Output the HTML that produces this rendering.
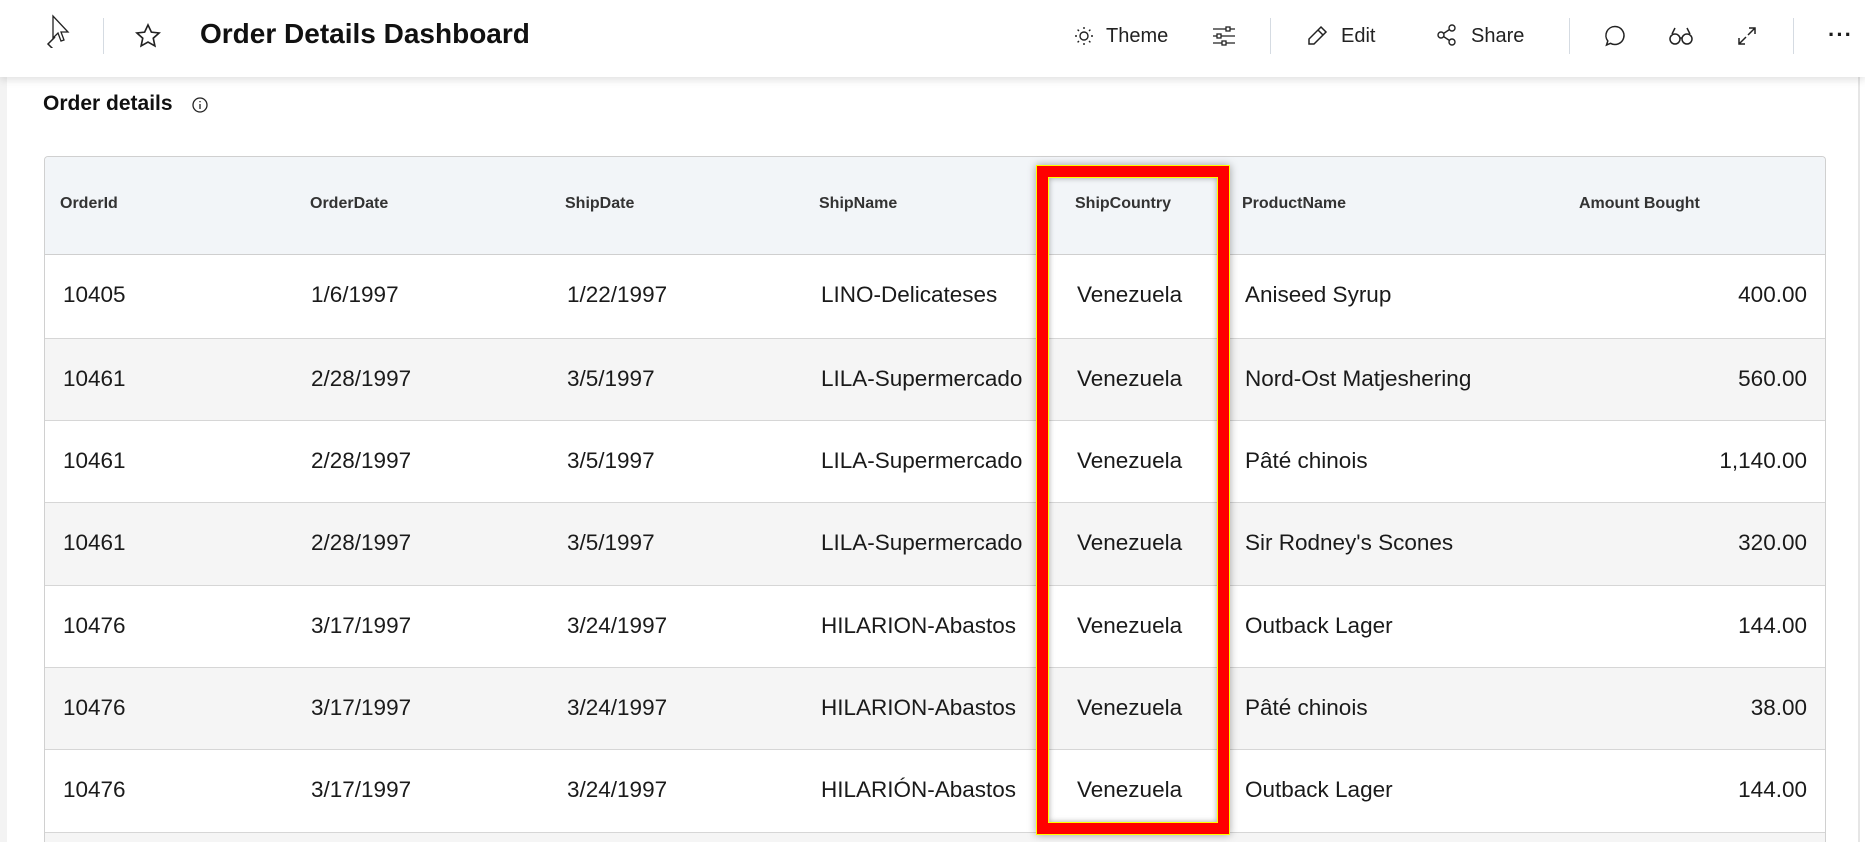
<!DOCTYPE html>
<html><head><meta charset="utf-8"><style>
*{margin:0;padding:0;box-sizing:border-box}
html,body{width:1865px;height:842px;overflow:hidden}
body{background:#fff;font-family:"Liberation Sans",sans-serif;color:#1a1a1a;position:relative}
.hdr{position:absolute;left:0;top:0;width:1865px;height:77px;background:#fff;box-shadow:0 3px 8px rgba(0,0,0,.12);z-index:2}
.abs{position:absolute}
.vd{position:absolute;top:18px;width:1px;height:36px;background:#d5dbe2}
.t{position:absolute;top:25px;font-size:20px;color:#222}
.leftstrip{position:absolute;left:0;top:77px;width:7px;height:765px;background:#f3f3f3}
.rightline{position:absolute;left:1858px;top:77px;width:2px;height:765px;background:#e6e6e6}
.tbl{position:absolute;left:44px;top:156px;width:1782px;height:686px;border:1px solid #d0d0d0;border-bottom:none;border-radius:4px 4px 0 0;overflow:hidden}
.th{position:absolute;left:0;top:0;width:100%;height:98px;background:#f2f5f8;border-bottom:1px solid #cfcfcf}
.th span{position:absolute;top:38px;font-size:16px;font-weight:bold;color:#333}
.row{position:absolute;left:0;width:100%;height:83px;border-top:1px solid #d6d6d6}
.row span{position:absolute;top:27px;font-size:22.5px}
.row .amt{right:18px}
</style></head><body>
<div class="hdr">
 <svg class="abs" style="left:45px;top:14px" width="26" height="34" viewBox="0 0 26 34"><path d="M8 2 L8 24 L13 19 L16 27 L19 26 L16 18 L23 18 Z" fill="#fff" stroke="#222" stroke-width="1.3"/><path d="M10 23 L3 30 L10 37" fill="none" stroke="#222" stroke-width="1.5"/></svg>
 <div class="vd" style="left:103px"></div>
 <svg class="abs" style="left:134px;top:22px" width="28" height="28" viewBox="0 0 24 24"><path d="M12 2.5l2.9 6.2 6.6.7-5 4.5 1.4 6.6L12 17.2 6.1 20.5l1.4-6.6-5-4.5 6.6-.7z" fill="none" stroke="#222" stroke-width="1.4"/></svg>
 <div class="abs" style="left:200px;top:18px;font-size:28px;font-weight:bold;color:#111">Order Details Dashboard</div>
 <svg class="abs" style="left:1074px;top:26px" width="20" height="20" viewBox="0 0 20 20" fill="none" stroke="#222" stroke-width="1.4"><circle cx="10" cy="10" r="4"/><path d="M10 1v2M10 17v2M1 10h2M17 10h2M3.6 3.6l1.4 1.4M15 15l1.4 1.4M3.6 16.4L5 15M15 5l1.4-1.4"/></svg>
 <div class="t" style="left:1106px">Theme</div>
 <svg class="abs" style="left:1212px;top:24px" width="24" height="24" viewBox="0 0 24 24" fill="none" stroke="#222" stroke-width="1.3"><path d="M1 5h22M1 12h22M1 19h22"/><rect x="14" y="3" width="4" height="4" fill="#fff"/><rect x="5" y="10" width="4" height="4" fill="#fff"/><rect x="10" y="17" width="4" height="4" fill="#fff"/></svg>
 <div class="vd" style="left:1270px"></div>
 <svg class="abs" style="left:1306px;top:25px" width="22" height="22" viewBox="0 0 22 22" fill="none" stroke="#222" stroke-width="1.5"><path d="M15 2l5 5L8 19H3v-5z M12 5l5 5"/></svg>
 <div class="t" style="left:1341px">Edit</div>
 <svg class="abs" style="left:1436px;top:24px" width="22" height="22" viewBox="0 0 22 22" fill="none" stroke="#222" stroke-width="1.4"><circle cx="5" cy="11" r="3"/><circle cx="16" cy="4" r="3"/><circle cx="16" cy="18" r="3"/><path d="M7.5 9.5l6-4M7.5 12.5l6 4"/></svg>
 <div class="t" style="left:1471px">Share</div>
 <div class="vd" style="left:1569px"></div>
 <svg class="abs" style="left:1603px;top:24px" width="24" height="24" viewBox="0 0 24 24" fill="none" stroke="#222" stroke-width="1.5"><path d="M12 2.5a9 9 0 1 1-4.5 16.8L3.5 21l1.3-4A9 9 0 0 1 12 2.5z"/></svg>
 <svg class="abs" style="left:1668px;top:26px" width="26" height="20" viewBox="0 0 26 20" fill="none" stroke="#222" stroke-width="1.5"><circle cx="7" cy="13" r="5"/><circle cx="19" cy="13" r="5"/><path d="M12 12h2M4 8l3-6M22 8l-3-6"/></svg>
 <svg class="abs" style="left:1736px;top:25px" width="22" height="22" viewBox="0 0 22 22" fill="none" stroke="#222" stroke-width="1.5"><path d="M13 3h6v6M19 3l-7 7M9 19H3v-6M3 19l7-7"/></svg>
 <div class="vd" style="left:1793px"></div>
 <div class="abs" style="left:1828px;top:22px;font-size:22px;font-weight:bold;letter-spacing:1px">···</div>
</div>
<div class="leftstrip"></div><div class="rightline"></div>
<div class="abs" style="left:43px;top:92px;font-size:21px;font-weight:bold;color:#111">Order details</div>
<svg class="abs" style="left:191px;top:96px" width="18" height="18" viewBox="0 0 18 18" fill="none" stroke="#222" stroke-width="1.3"><circle cx="9" cy="9" r="7"/><path d="M9 8v5M9 5v1.2"/></svg>
<div class="tbl">
 <div class="th"><span style="left:15px">OrderId</span><span style="left:265px">OrderDate</span><span style="left:520px">ShipDate</span><span style="left:774px">ShipName</span><span style="left:1030px">ShipCountry</span><span style="left:1197px">ProductName</span><span style="left:1534px">Amount Bought</span></div>
 <div class="row" style="top:98px;background:#fff;border-top:none"><span style="left:18px">10405</span><span style="left:266px">1/6/1997</span><span style="left:522px">1/22/1997</span><span style="left:776px">LINO-Delicateses</span><span style="left:1032px">Venezuela</span><span style="left:1200px">Aniseed Syrup</span><span class="amt">400.00</span></div>
 <div class="row" style="top:181px;background:#f5f5f5"><span style="left:18px">10461</span><span style="left:266px">2/28/1997</span><span style="left:522px">3/5/1997</span><span style="left:776px">LILA-Supermercado</span><span style="left:1032px">Venezuela</span><span style="left:1200px">Nord-Ost Matjeshering</span><span class="amt">560.00</span></div>
 <div class="row" style="top:263px;background:#fff"><span style="left:18px">10461</span><span style="left:266px">2/28/1997</span><span style="left:522px">3/5/1997</span><span style="left:776px">LILA-Supermercado</span><span style="left:1032px">Venezuela</span><span style="left:1200px">Pâté chinois</span><span class="amt">1,140.00</span></div>
 <div class="row" style="top:345px;background:#f5f5f5"><span style="left:18px">10461</span><span style="left:266px">2/28/1997</span><span style="left:522px">3/5/1997</span><span style="left:776px">LILA-Supermercado</span><span style="left:1032px">Venezuela</span><span style="left:1200px">Sir Rodney's Scones</span><span class="amt">320.00</span></div>
 <div class="row" style="top:428px;background:#fff"><span style="left:18px">10476</span><span style="left:266px">3/17/1997</span><span style="left:522px">3/24/1997</span><span style="left:776px">HILARION-Abastos</span><span style="left:1032px">Venezuela</span><span style="left:1200px">Outback Lager</span><span class="amt">144.00</span></div>
 <div class="row" style="top:510px;background:#f5f5f5"><span style="left:18px">10476</span><span style="left:266px">3/17/1997</span><span style="left:522px">3/24/1997</span><span style="left:776px">HILARION-Abastos</span><span style="left:1032px">Venezuela</span><span style="left:1200px">Pâté chinois</span><span class="amt">38.00</span></div>
 <div class="row" style="top:592px;background:#fff"><span style="left:18px">10476</span><span style="left:266px">3/17/1997</span><span style="left:522px">3/24/1997</span><span style="left:776px">HILARIÓN-Abastos</span><span style="left:1032px">Venezuela</span><span style="left:1200px">Outback Lager</span><span class="amt">144.00</span></div>
 <div class="row" style="top:675px;background:#f5f5f5;height:11px"></div>
</div>
<div class="abs" style="left:1036px;top:165px;width:194px;height:670px;border:1px solid #ff0;box-shadow:0 0 8px rgba(0,0,0,.35);z-index:3">
 <div style="position:absolute;inset:0;border:11px solid #f00"></div>
 <div style="position:absolute;inset:11px;border:1px solid #ff0;box-shadow:inset 0 0 6px rgba(0,0,0,.35)"></div>
</div>
</body></html>
